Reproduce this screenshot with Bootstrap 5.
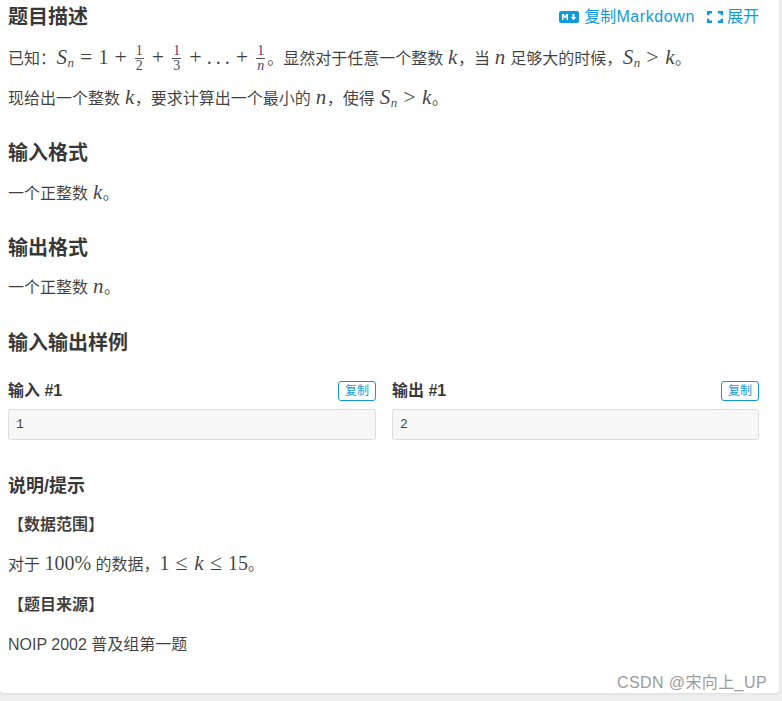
<!DOCTYPE html>
<html lang="zh">
<head>
<meta charset="utf-8">
<title>题目描述</title>
<link rel="stylesheet" href="https://cdn.jsdelivr.net/npm/bootstrap@5.3.0/dist/css/bootstrap.min.css">
<style>
html,body{height:701px;overflow:hidden;margin:0;background:#efefef;}
body{font-family:"Liberation Sans","Noto Sans CJK SC",sans-serif;font-size:16px;color:rgba(0,0,0,.75);line-height:24px;position:relative;}
.sheet{width:779px;height:693px;background:#fff;border-radius:0 0 4px 4px;box-shadow:0 1px 3px rgba(26,26,26,.1);padding:0 20px 0 8px;}
.sec-title{font-size:20px;font-weight:700;line-height:24px;margin:0;color:rgba(0,0,0,.8);}
.sec-small{font-size:18px;}
.first-head{height:34px;padding-top:5px;}
.para{margin:0;height:24px;white-space:nowrap;}
.m{font-family:"Liberation Serif","DejaVu Serif",serif;font-size:20px;line-height:1;}
.m i{font-style:italic;font-size:21px;padding:0 .5px;}
.m sub{font-size:13px;font-style:italic;bottom:-.25em;}
.mo{margin:0 6px;font-size:22px;}
.dots{margin-left:-1px;word-spacing:-1px;}
.frac{display:inline-flex;flex-direction:column;align-items:center;vertical-align:middle;font-size:14px;line-height:14px;font-family:"Liberation Serif",serif;margin:0 2px;position:relative;top:-1px;}
.frac>span:first-child{border-bottom:1px solid #555;padding:0 1px;color:#7a2a62;}
.frac>span:last-child{color:#35506e;}
.frac i{font-size:14px;padding:0;}
.tool-link{color:#0e9bd8;text-decoration:none;font-size:16px;line-height:24px;}
.latin-wide{letter-spacing:.6px;}
.md-ico{width:20px;height:12px;margin-right:5px;}
.full-ico{width:16px;height:12px;margin-right:4px;}
.sample-title{font-size:16px;font-weight:700;line-height:24px;margin:0;color:rgba(0,0,0,.8);}
.copy-btn{border:1px solid #0e9bd8;border-radius:3px;color:#0e9bd8;background:#fff;font-size:12px;line-height:18px;height:20px;width:38px;padding:0;text-align:center;}
.code-box{background:#f7f7f7;border:1px solid #ddd;border-radius:3px;height:31px;margin:0;padding:0 7px;font-family:"Liberation Mono","Noto Sans CJK SC",monospace;font-size:13px;line-height:29px;color:rgba(0,0,0,.75);}
.sample-grid{display:grid;grid-template-columns:368px 367px;column-gap:16px;}
.head-row{margin-bottom:6px;}
.wm{position:absolute;left:617px;top:671px;font-size:16px;line-height:24px;letter-spacing:.4px;color:#9b9b9b;white-space:nowrap;}
.g1{margin-top:11px}.g1b{margin-top:17px}
.g2a{margin-top:31px}.g2b{margin-top:30px}.g2c{margin-top:31px}
.g3a{margin-top:17px}.g3b{margin-top:16px}
.g5{margin-top:24px}
.g6{margin-top:34px}.g7{margin-top:15px}.g8{margin-top:15px}.g9{margin-top:17px}.g10{margin-top:16px}
.src-title{font-weight:700;}
</style>
</head>
<body>
<div class="sheet">
  <div class="d-flex justify-content-between align-items-start first-head">
    <h2 class="sec-title">题目描述</h2>
    <div class="d-flex align-items-center">
      <a class="tool-link d-inline-flex align-items-center" href="#">
        <svg class="md-ico" viewBox="0 0 20 12" aria-hidden="true"><rect width="20" height="12" rx="2" fill="#0e9bd8"/><path d="M3 9V3h1.600L6 5l1.400-2H9v6H7.500V5.400L6 7.400 4.500 5.400V9zM13.500 3h2v3h1.800l-2.800 3.200L11.700 6h1.800z" fill="#fff"/></svg>
        <span>复制<span class="latin-wide">Markdown</span></span>
      </a>
      <a class="tool-link d-inline-flex align-items-center ms-2 ps-1" href="#">
        <svg class="full-ico" viewBox="0 0 16 12" aria-hidden="true"><path d="M5 1.200H1.200v3M10.900 1.200h3.900v3M14.800 7.800v3h-3.900M5 10.800H1.200v-3" fill="none" stroke="#0e9bd8" stroke-width="2.400"/></svg>
        展开
      </a>
    </div>
  </div>
  <p class="para g1">已知：<span class="m"><i>S</i><sub>n</sub><span class="mo">=</span>1<span class="mo">+</span><span class="frac"><span>1</span><span>2</span></span><span class="mo">+</span><span class="frac"><span>1</span><span>3</span></span><span class="mo">+</span><span class="dots">. . .</span><span class="mo">+</span><span class="frac"><span>1</span><span><i>n</i></span></span></span>。显然对于任意一个整数 <span class="m"><i>k</i></span>，当 <span class="m"><i>n</i></span> 足够大的时候，<span class="m"><i>S</i><sub>n</sub><span class="mo">&gt;</span><i>k</i></span>。</p>
  <p class="para g1b">现给出一个整数 <span class="m"><i>k</i></span>，要求计算出一个最小的 <span class="m"><i>n</i></span>，使得 <span class="m"><i>S</i><sub>n</sub><span class="mo">&gt;</span><i>k</i></span>。</p>

  <h2 class="sec-title g2a">输入格式</h2>
  <p class="para g3a">一个正整数 <span class="m"><i>k</i></span>。</p>

  <h2 class="sec-title g2b">输出格式</h2>
  <p class="para g3b">一个正整数 <span class="m"><i>n</i></span>。</p>

  <h2 class="sec-title g2c">输入输出样例</h2>

  <div class="sample-grid g5">
    <div>
      <div class="d-flex justify-content-between align-items-center head-row">
        <h3 class="sample-title">输入 #1</h3>
        <button class="copy-btn" type="button">复制</button>
      </div>
      <pre class="code-box">1</pre>
    </div>
    <div>
      <div class="d-flex justify-content-between align-items-center head-row">
        <h3 class="sample-title">输出 #1</h3>
        <button class="copy-btn" type="button">复制</button>
      </div>
      <pre class="code-box">2</pre>
    </div>
  </div>

  <h2 class="sec-title sec-small g6">说明/提示</h2>
  <p class="para g7 src-title">【数据范围】</p>
  <p class="para g8">对于 <span class="m">100%</span> 的数据，<span class="m">1<span class="mo">≤</span><i>k</i><span class="mo">≤</span>15</span>。</p>
  <p class="para g9 src-title">【题目来源】</p>
  <p class="para g10">NOIP 2002 普及组第一题</p>
</div>
<div class="wm">CSDN @宋向上_UP</div>
</body>
</html>
